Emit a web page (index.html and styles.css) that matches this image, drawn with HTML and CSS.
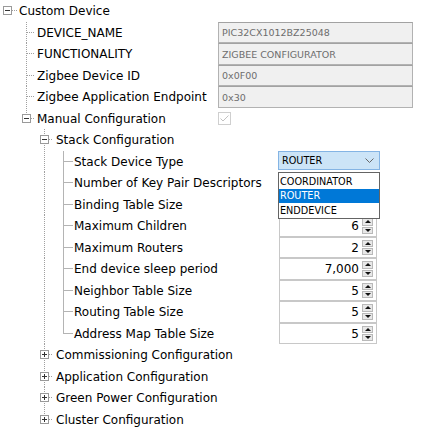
FILE: index.html
```html
<!DOCTYPE html>
<html lang="en">
<head>
<meta charset="utf-8">
<title>Custom Device</title>
<link rel="stylesheet" href="styles.css">
</head>
<body>
<div class="tree">
  <div class="row">
    <div class="node"><div class="c h"><span class="box minus"></span></div><span class="lbl">Custom Device</span></div>
  </div>
  <div class="row">
    <div class="node"><div class="c"></div><div class="c tee"></div><span class="lbl">DEVICE_NAME</span></div>
    <div class="val"><div class="field">PIC32CX1012BZ25048</div></div>
  </div>
  <div class="row">
    <div class="node"><div class="c"></div><div class="c tee"></div><span class="lbl">FUNCTIONALITY</span></div>
    <div class="val"><div class="field">ZIGBEE CONFIGURATOR</div></div>
  </div>
  <div class="row">
    <div class="node"><div class="c"></div><div class="c tee"></div><span class="lbl">Zigbee Device ID</span></div>
    <div class="val"><div class="field">0x0F00</div></div>
  </div>
  <div class="row">
    <div class="node"><div class="c"></div><div class="c tee"></div><span class="lbl">Zigbee Application Endpoint</span></div>
    <div class="val"><div class="field">0x30</div></div>
  </div>
  <div class="row">
    <div class="node"><div class="c"></div><div class="c end"><span class="box minus"></span></div><span class="lbl">Manual Configuration</span></div>
    <div class="val center"><svg class="check" width="13" height="13" viewBox="0 0 13 13"><rect x="0.5" y="0.5" width="12" height="12" fill="#fff" stroke="#cfcfcf"/><path d="M2.5 6.5 L5 9 L10.5 3.5" fill="none" stroke="#c2c2c2" stroke-width="1"/></svg></div>
  </div>
  <div class="row">
    <div class="node"><div class="c"></div><div class="c"></div><div class="c tee"><span class="box minus"></span></div><span class="lbl">Stack Configuration</span></div>
  </div>
  <div class="row">
    <div class="node wide"><div class="c"></div><div class="c"></div><div class="c pass"></div><div class="c tee solid"></div><span class="lbl">Stack Device Type</span></div>
    <div class="val">
      <div class="combo-wrap">
        <div class="combo"><span>ROUTER</span><svg width="9" height="5" viewBox="0 0 9 5"><path d="M0.5 0.5 L4.5 4.5 L8.5 0.5" fill="none" stroke="#666" stroke-width="1"/></svg></div>
        <div class="list">
          <div class="opt">COORDINATOR</div>
          <div class="opt sel">ROUTER</div>
          <div class="opt">ENDDEVICE</div>
        </div>
      </div>
    </div>
  </div>
  <div class="row">
    <div class="node wide"><div class="c"></div><div class="c"></div><div class="c pass"></div><div class="c tee solid"></div><span class="lbl">Number of Key Pair Descriptors</span></div>
    <div class="val"><div class="spin"><span class="num">3</span><div class="btns"><span class="up"></span><span class="dn"></span></div></div></div>
  </div>
  <div class="row">
    <div class="node wide"><div class="c"></div><div class="c"></div><div class="c pass"></div><div class="c tee solid"></div><span class="lbl">Binding Table Size</span></div>
    <div class="val"><div class="spin"><span class="num">1</span><div class="btns"><span class="up"></span><span class="dn"></span></div></div></div>
  </div>
  <div class="row">
    <div class="node wide"><div class="c"></div><div class="c"></div><div class="c pass"></div><div class="c tee solid"></div><span class="lbl">Maximum Children</span></div>
    <div class="val"><div class="spin"><span class="num">6</span><div class="btns"><span class="up"></span><span class="dn"></span></div></div></div>
  </div>
  <div class="row">
    <div class="node wide"><div class="c"></div><div class="c"></div><div class="c pass"></div><div class="c tee solid"></div><span class="lbl">Maximum Routers</span></div>
    <div class="val"><div class="spin"><span class="num">2</span><div class="btns"><span class="up"></span><span class="dn"></span></div></div></div>
  </div>
  <div class="row">
    <div class="node wide"><div class="c"></div><div class="c"></div><div class="c pass"></div><div class="c tee solid"></div><span class="lbl">End device sleep period</span></div>
    <div class="val"><div class="spin"><span class="num">7,000</span><div class="btns"><span class="up"></span><span class="dn"></span></div></div></div>
  </div>
  <div class="row">
    <div class="node wide"><div class="c"></div><div class="c"></div><div class="c pass"></div><div class="c tee solid"></div><span class="lbl">Neighbor Table Size</span></div>
    <div class="val"><div class="spin"><span class="num">5</span><div class="btns"><span class="up"></span><span class="dn"></span></div></div></div>
  </div>
  <div class="row">
    <div class="node wide"><div class="c"></div><div class="c"></div><div class="c pass"></div><div class="c tee solid"></div><span class="lbl">Routing Table Size</span></div>
    <div class="val"><div class="spin"><span class="num">5</span><div class="btns"><span class="up"></span><span class="dn"></span></div></div></div>
  </div>
  <div class="row">
    <div class="node wide"><div class="c"></div><div class="c"></div><div class="c pass"></div><div class="c end solid"></div><span class="lbl">Address Map Table Size</span></div>
    <div class="val"><div class="spin"><span class="num">5</span><div class="btns"><span class="up"></span><span class="dn"></span></div></div></div>
  </div>
  <div class="row">
    <div class="node"><div class="c"></div><div class="c"></div><div class="c tee"><span class="box plus"></span></div><span class="lbl">Commissioning Configuration</span></div>
  </div>
  <div class="row">
    <div class="node"><div class="c"></div><div class="c"></div><div class="c tee"><span class="box plus"></span></div><span class="lbl">Application Configuration</span></div>
  </div>
  <div class="row">
    <div class="node"><div class="c"></div><div class="c"></div><div class="c tee"><span class="box plus"></span></div><span class="lbl">Green Power Configuration</span></div>
  </div>
  <div class="row">
    <div class="node"><div class="c"></div><div class="c"></div><div class="c end"><span class="box plus"></span></div><span class="lbl">Cluster Configuration</span></div>
  </div>
</div>
</body>
</html>
```

FILE: styles.css
```css
* { box-sizing: border-box; }
html, body { margin: 0; background: #fff; }
body {
  font-family: "DejaVu Sans", sans-serif;
  font-size: 12px;
  color: #000;
  width: 431px;
  height: 437px;
  overflow: hidden;
}
.tree { display: flex; flex-direction: column; }
.row { display: flex; align-items: stretch; }
.row:nth-child(odd) { height: 22px; }
.row:nth-child(even) { height: 21px; }

.node {
  flex: 0 0 218px;
  display: flex;
  align-items: center;
  white-space: nowrap;
}
.node.wide { flex-basis: 278px; }
.lbl { line-height: 1; }

.c {
  flex: 0 0 19px;
  align-self: stretch;
  display: flex;
  align-items: flex-start;
  --dot: #a0a0a0;
}
.c:nth-child(2), .c:nth-child(4) { flex-basis: 18px; }
.c.pass {
  background: repeating-linear-gradient(180deg, var(--dot) 0 1px, transparent 1px 2px) 7px 0 / 1px 100% no-repeat;
}
.c.tee {
  background:
    repeating-linear-gradient(90deg, var(--dot) 0 1px, transparent 1px 2px) 8px 10px / 8px 1px no-repeat,
    repeating-linear-gradient(180deg, var(--dot) 0 1px, transparent 1px 2px) 7px 0 / 1px 100% no-repeat;
}
.c.end {
  background:
    repeating-linear-gradient(90deg, var(--dot) 0 1px, transparent 1px 2px) 8px 10px / 8px 1px no-repeat,
    repeating-linear-gradient(180deg, var(--dot) 0 1px, transparent 1px 2px) 7px 0 / 1px 11px no-repeat;
}
.c.h {
  background: repeating-linear-gradient(90deg, var(--dot) 0 1px, transparent 1px 2px) 8px 10px / 9px 1px no-repeat;
}
.c.tee.solid {
  background:
    linear-gradient(#b4b4b4, #b4b4b4) 8px 10px / 9px 1px no-repeat,
    linear-gradient(#b4b4b4, #b4b4b4) 7px 0 / 1px 100% no-repeat;
}
.c.end.solid {
  background:
    linear-gradient(#b4b4b4, #b4b4b4) 8px 10px / 9px 1px no-repeat,
    linear-gradient(#b4b4b4, #b4b4b4) 7px 0 / 1px 11px no-repeat;
}

.box {
  width: 9px;
  height: 9px;
  margin: 6px 0 0 3px;
  border: 1px solid #9a9a9a;
  background-color: #fff;
}
.box.minus {
  background: linear-gradient(#333, #333) 1px 3px / 5px 1px no-repeat, #fff;
}
.box.plus {
  background:
    linear-gradient(#333, #333) 1px 3px / 5px 1px no-repeat,
    linear-gradient(#333, #333) 3px 1px / 1px 5px no-repeat,
    #fff;
}

.val { flex: 1; display: flex; align-items: stretch; }
.val.center { align-items: center; }

.field {
  width: 195px;
  height: 100%;
  background: #f0f0f0;
  border: 1px solid #b2b2b2;
  border-top-color: #a2a2a2;
  color: #6d6d6d;
  font-size: 9.5px;
  padding-left: 3px;
  display: flex;
  align-items: center;
  white-space: nowrap;
}
.check { display: block; }

.combo-wrap {
  position: relative;
  width: 102px;
  height: 100%;
}
.combo {
  height: 19px;
  background: #cce4f7;
  border: 1px solid #84b4e4;
  display: flex;
  align-items: center;
  justify-content: space-between;
  padding: 0 5px 0 3px;
  font-size: 9.7px;
}
.combo svg { display: block; }
.list {
  position: absolute;
  left: 0;
  top: 100%;
  width: 102px;
  border: 1px solid #646464;
  background: #fff;
  padding-top: 1px;
  font-size: 9.7px;
  z-index: 2;
}
.opt {
  height: 14.67px;
  display: flex;
  align-items: center;
  padding-left: 1px;
}
.opt.sel { background: #0078d7; color: #fff; }

.spin {
  width: 98px;
  height: 100%;
  margin-left: 1px;
  border: 1px solid #c8c8c8;
  background: #fff;
  display: flex;
  align-items: stretch;
}
.num {
  flex: 1;
  display: flex;
  align-items: center;
  justify-content: flex-end;
  padding-right: 3px;
  font-size: 12px;
}
.btns {
  width: 11px;
  margin: 2px 3px 2px 0;
  display: flex;
  flex-direction: column;
  gap: 1px;
}
.up, .dn {
  flex: 1;
  background: #e8e8e8;
  border: 1px solid #b9b9b9;
  display: flex;
  align-items: center;
  justify-content: center;
}
.up::before {
  content: "";
  border-left: 3px solid transparent;
  border-right: 3px solid transparent;
  border-bottom: 3px solid #111;
}
.dn::before {
  content: "";
  border-left: 3px solid transparent;
  border-right: 3px solid transparent;
  border-top: 3px solid #111;
}
```
